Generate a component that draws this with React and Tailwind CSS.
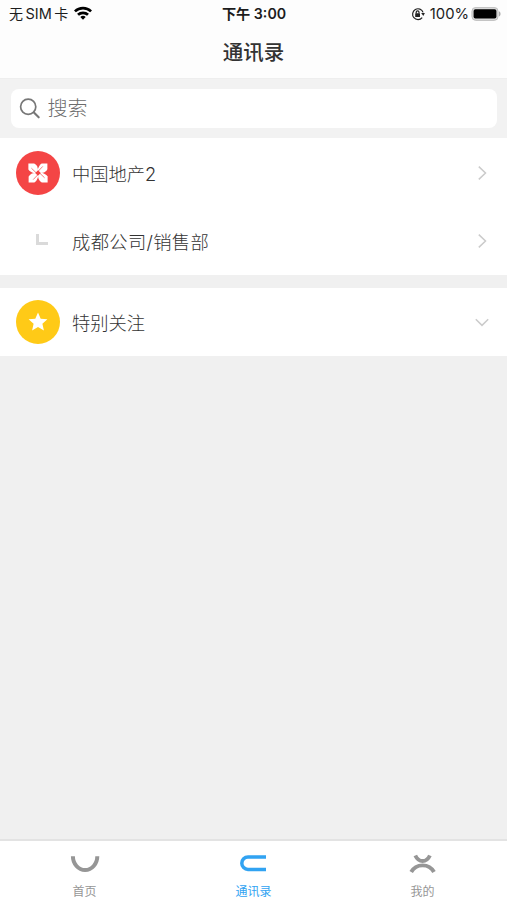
import React, { useState } from 'react';

function WifiIcon() {
  return (
    <svg viewBox="0 0 18 14" className="-mt-[3px] ml-[6px] h-[14px] w-[18px]" fill="none" stroke="#000" strokeWidth="2.7">
      <path d="M0.9 5.4a11.6 11.6 0 0 1 16.2 0" />
      <path d="M4 8.8a7.2 7.2 0 0 1 10 0" />
      <path d="M9 13.8l-2.7-2.8a4 4 0 0 1 5.4 0z" fill="#000" stroke="none" />
    </svg>
  );
}

function RotationLockIcon() {
  return (
    <svg viewBox="0 0 14 14" className="h-[14px] w-[14px]" fill="none" stroke="#222" strokeWidth="1.2">
      <path d="M11.2 10.6A5.4 5.4 0 1 1 12.1 5.4" />
      <path d="M10.2 6.1h3.7l-1.6 2.9z" fill="#222" stroke="none" />
      <rect x="4.2" y="6.2" width="4.8" height="3.8" rx="0.6" fill="#222" stroke="none" />
      <path d="M5.2 6.4V5.3a1.4 1.4 0 0 1 2.8 0v1.1" />
    </svg>
  );
}

function BatteryIcon() {
  return (
    <svg viewBox="0 0 30 14" className="ml-[2px] h-[14px] w-[30px]">
      <rect x="0.9" y="0.4" width="26.2" height="13" rx="4" fill="#d9d9d9" stroke="#b5b5b5" strokeWidth="0.8" />
      <rect x="2.6" y="2.2" width="22.8" height="9.4" rx="1.8" fill="#000" />
      <path d="M28 4.3c2 .9 2 4.3 0 5.2z" fill="#aaa" />
    </svg>
  );
}

function SearchIcon() {
  return (
    <svg viewBox="0 0 22 22" className="h-[22px] w-[22px]" fill="none" stroke="#777" strokeWidth="1.7" strokeLinecap="round">
      <circle cx="9.2" cy="8.8" r="7.6" />
      <path d="M14.9 14.5l4.8 4.8" strokeWidth="2.1" />
    </svg>
  );
}

// Four petals turned around an empty centre
function CompanyLogo() {
  return (
    <svg viewBox="0 0 20 20" className="h-5 w-5">
      {[0, 90, 180, 270].map((deg) => (
        <g key={deg} transform={`rotate(${deg} 10 10)`}>
          <path d="M.4.6h5.8c1.6.6 2.8 2.2 3.5 4.4l.3 2.4-3 3C3.7 9.300 1.400 8.200.4 6.400z" fill="#fff" />
          <path d="M3.4 5.2l5.4 5.2" stroke="#f44545" strokeWidth="0.7" />
        </g>
      ))}
      <path d="M10 7.4L12.6 10 10 12.6 7.4 10z" fill="#f44545" />
    </svg>
  );
}

function StarIcon() {
  return (
    <svg viewBox="0 0 20 20" className="h-5 w-5" fill="#fff">
      <path d="M10 .5l2.7 6.2 6.7.6-5 4.5 1.5 6.6L10 15l-5.9 3.4 1.5-6.6-5-4.5 6.7-.6z" />
    </svg>
  );
}

function Chevron({ down }) {
  return (
    <svg viewBox="0 0 14 14" className="h-[14px] w-[14px]" fill="none" stroke="#cbcbcb" strokeWidth="1.5">
      {down ? <path d="M.8 4.3L7 10.4l6.2-6.1" /> : <path d="M3.8.6L10.5 7l-6.7 6.4" />}
    </svg>
  );
}

function HomeIcon() {
  return (
    <svg viewBox="0 0 30 20" className="h-5 w-[30px]" fill="none" stroke="currentColor" strokeWidth="4">
      <path d="M2.9 2.3a12.2 13.7 0 0 0 24.4 0" />
    </svg>
  );
}

function ContactsIcon() {
  return (
    <svg viewBox="0 0 30 20" className="h-5 w-[30px]" fill="none" stroke="currentColor" strokeWidth="3.5">
      <path d="M27 3H9a6.2 6.2 0 0 0 0 12.4H27" />
    </svg>
  );
}

function MineIcon() {
  return (
    <svg viewBox="0 0 30 20" className="h-5 w-[30px]" fill="none" stroke="currentColor" strokeWidth="3.9">
      <path d="M7.3 1.5c3.5 7.4 11.1 7.4 14.6 0" />
      <path d="M3.2 18c4.8-8.9 18-8.9 22.8 0" />
    </svg>
  );
}

function Row({ icon, label, down }) {
  return (
    <div className="flex h-[68.3px] items-center bg-white pl-[15.5px] pr-[18px]">
      <div className="flex w-11 shrink-0 justify-center">{icon}</div>
      <span className="ml-[12.5px] mt-[2px] flex-1 text-[18.3px] font-light leading-6 text-[#333]">{label}</span>
      <Chevron down={down} />
    </div>
  );
}

const tabs = [
  { id: 'home', label: '首页', Icon: HomeIcon },
  { id: 'contacts', label: '通讯录', Icon: ContactsIcon },
  { id: 'mine', label: '我的', Icon: MineIcon },
];

export default function App() {
  const [active, setActive] = useState('contacts');

  return (
    <div className="flex h-screen w-full flex-col bg-[#f0f0f0] font-['Inter','Noto_Sans_CJK_SC',sans-serif]">
      <header className="h-[79px] border-b border-[#eeeeee] bg-[#fdfdfd]">
        {/* Status bar */}
        <div className="grid h-7 grid-cols-3 items-center pl-[9px] pr-[6px] text-[14px] text-[#1c1c1c]">
          <div className="flex items-center">
            <span className="-mt-px">无</span>
            <span className="mx-[2.5px] text-[14.5px]">SIM</span>
            <span className="-mt-px">卡</span>
            <WifiIcon />
          </div>
          <div className="-ml-0.5 text-center text-[14.2px] font-semibold">下午 3:00</div>
          <div className="flex items-center justify-end">
            <RotationLockIcon />
            <span className="ml-[5px] text-[14.8px]">100%</span>
            <BatteryIcon />
          </div>
        </div>
        <h1 className="mt-[10px] text-center text-[20.5px] font-medium leading-[30px] text-[#333]">通讯录</h1>
      </header>

      {/* Search */}
      <div className="h-[59px] bg-[#f2f2f2] pl-[11px] pr-[10px] pt-[10px]">
        <div className="flex h-[39px] items-center rounded-lg bg-white pl-2">
          <SearchIcon />
          <input
            type="text"
            placeholder="搜索"
            className="ml-[6.5px] min-w-0 flex-1 bg-transparent text-[20px] leading-7 outline-none placeholder:font-light placeholder:text-[#6c6c6c]"
          />
        </div>
      </div>

      <main className="flex-1">
        <div className="h-[137px] overflow-hidden bg-white pt-px">
          <Row
            icon={
              <div className="flex h-11 w-11 items-center justify-center rounded-full bg-[#f44545]">
                <CompanyLogo />
              </div>
            }
            label="中国地产2"
          />
          <div className="tracking-[0.35px]">
            <Row
              icon={<div className="ml-2 mb-1 h-[11px] w-[12px] border-b-3 border-l-3 border-[#dadada]" />}
              label="成都公司/销售部"
            />
          </div>
        </div>
        <div className="mt-[13px]">
          <Row
            icon={
              <div className="flex h-11 w-11 items-center justify-center rounded-full bg-[#ffca17]">
                <StarIcon />
              </div>
            }
            label="特别关注"
            down
          />
        </div>
      </main>

      <nav className="grid h-[61px] grid-cols-3 border-t-2 border-[#e3e3e3] bg-white">
        {tabs.map(({ id, label, Icon }) => (
          <button
            key={id}
            onClick={() => setActive(id)}
            className={`flex flex-col items-center pt-[13px] ${active === id ? 'text-[#31a3f2]' : 'text-[#969696]'}`}
          >
            <Icon />
            <span className="mt-[10px] text-[12px] leading-4">{label}</span>
          </button>
        ))}
      </nav>
    </div>
  );
}
